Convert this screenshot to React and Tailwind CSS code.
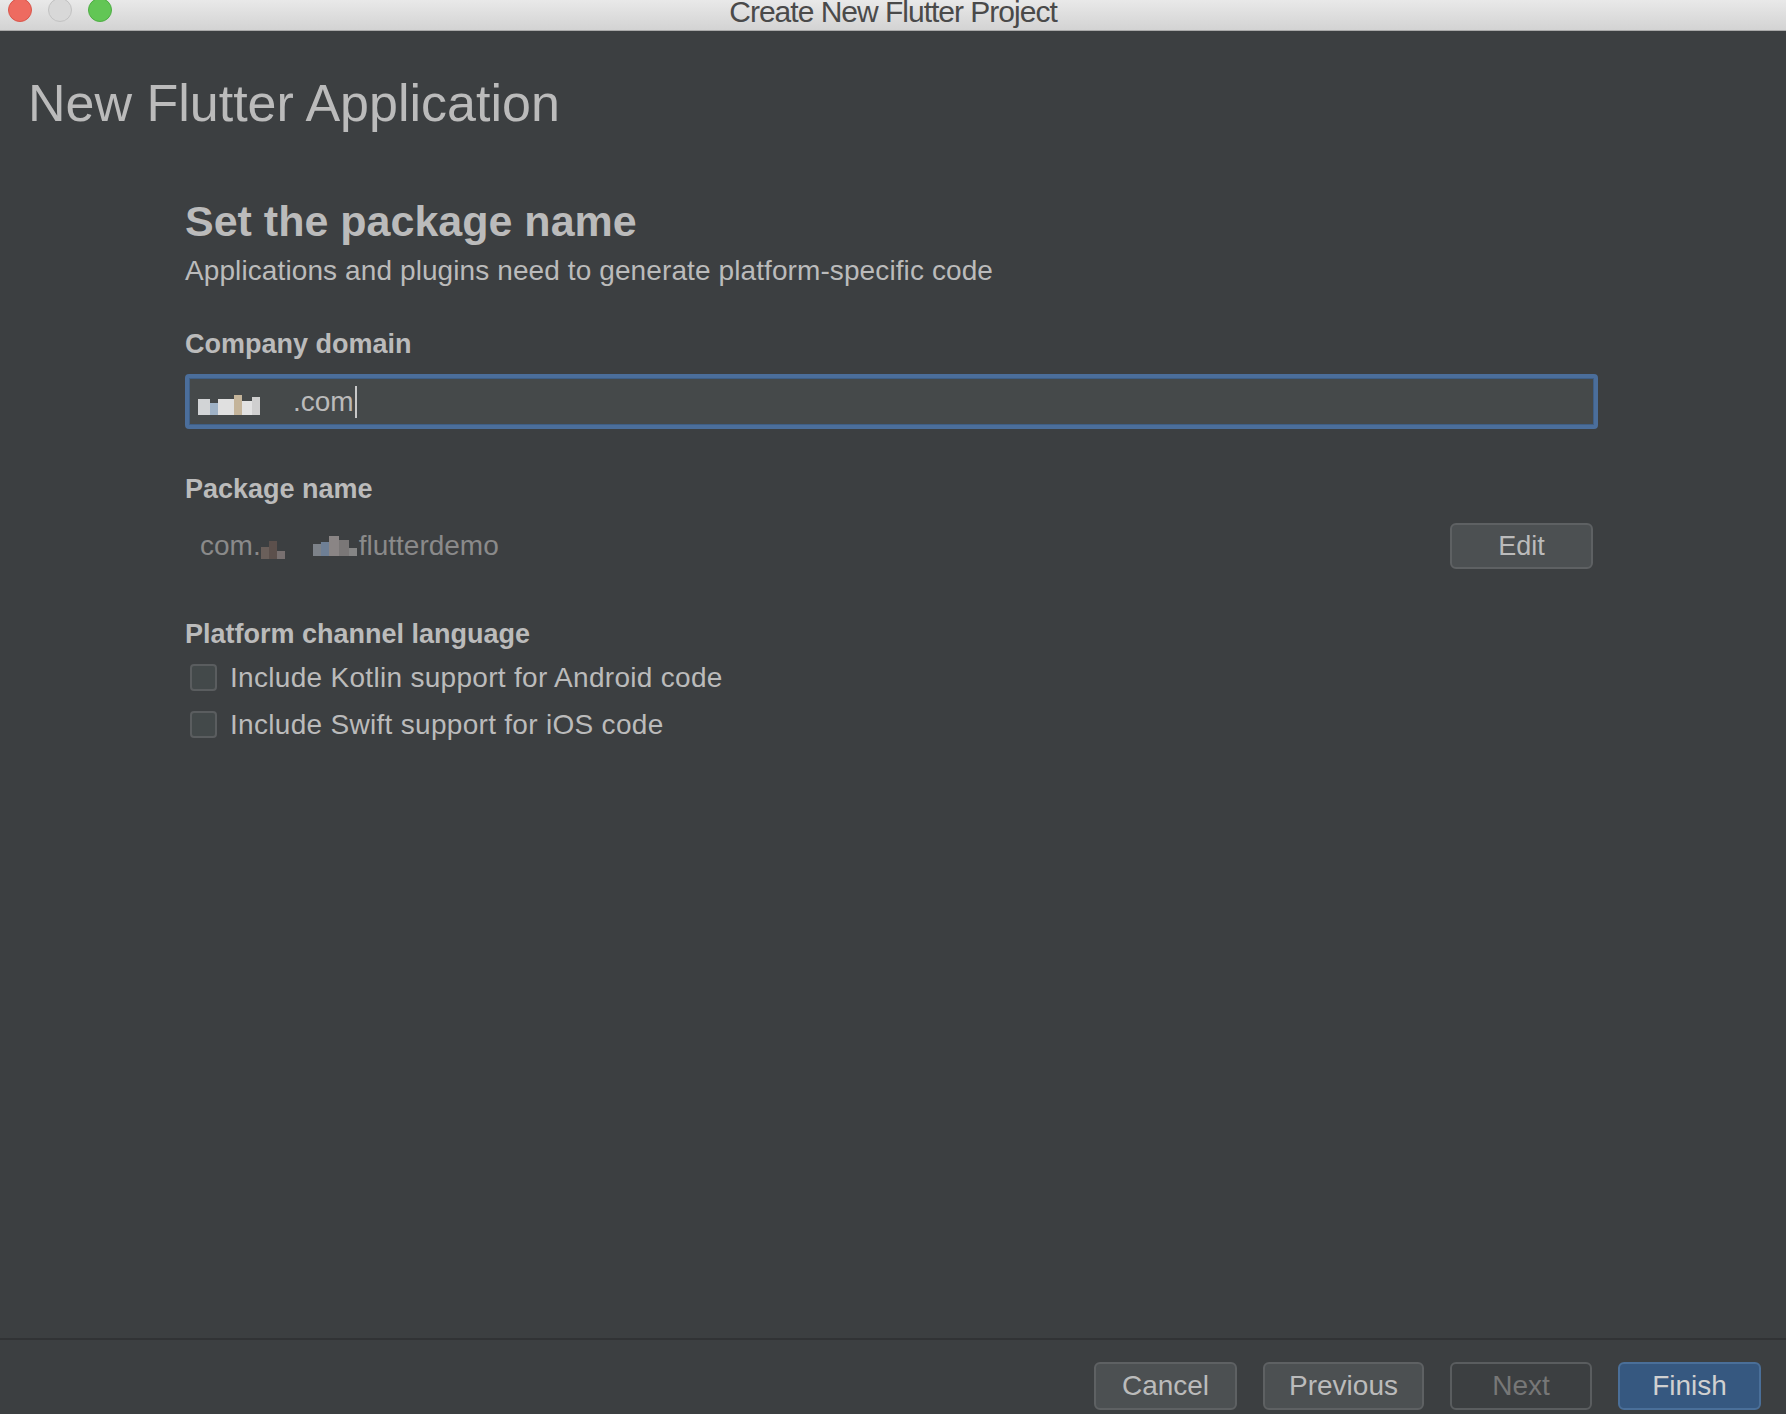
/**
 * Create New Flutter Project -- "Set the package name" wizard step (Darcula).
 */

const font = { fontFamily: '"Liberation Sans", Arial, sans-serif' };

function TrafficLights() {
  return (
    <div className="absolute left-[8px] top-[-2px] flex gap-[16px]">
      <div className="w-[24px] h-[24px] rounded-full bg-[#ee6b60] border border-[#d9574c]" />
      <div className="w-[24px] h-[24px] rounded-full bg-[#d8d8d8] border border-[#c2c2c2]" />
      <div className="w-[24px] h-[24px] rounded-full bg-[#62c655] border border-[#4fae45]" />
    </div>
  );
}

function Mosaic({ cells, className }) {
  return (
    <div className={`flex items-end ${className}`}>
      {cells.map((c, i) => (
        <div key={i} className={c} />
      ))}
    </div>
  );
}

function FooterButton({ children, variant = 'default' }) {
  const styles = {
    default: 'bg-[#4c5052] border-[#5e6163] text-[#bbbbbb]',
    disabled: 'bg-[#3c3f41] border-[#5a5d5f] text-[#777777]',
    primary: 'bg-[#365880] border-[#4a6f99] text-[#d0d0d0]',
  };
  return (
    <button className={`w-full h-[48px] rounded-[6px] border-2 text-[28px] leading-none ${styles[variant]}`}>
      {children}
    </button>
  );
}

export default function App() {
  return (
    <div className="h-[1414px] w-[1786px] flex flex-col bg-[#3c3f41] overflow-hidden" style={font}>
      {/* Window title bar */}
      <div className="relative h-[31px] shrink-0 bg-gradient-to-b from-[#e9e9e9] to-[#d3d3d3] border-b border-[#a9a9a9] overflow-hidden">
        <TrafficLights />
        <div className="flex justify-center">
          <span className="-mt-[3px] text-[30px] leading-none text-[#4a4a4a] tracking-[-1px]">
            Create New Flutter Project
          </span>
        </div>
      </div>

      {/* Wizard body */}
      <div className="flex-1 flex flex-col">
        <h1 className="ml-[28px] mt-[46px] text-[52px] leading-none font-normal text-[#bbbbbb]">
          New Flutter Application
        </h1>

        <div className="ml-[185px] w-[1413px] flex flex-col">
          <h2 className="mt-[71px] text-[43px] leading-none font-bold text-[#bbbbbb]">Set the package name</h2>
          <p className="mt-[14px] text-[28px] leading-none text-[#bbbbbb] tracking-[0.1px]">
            Applications and plugins need to generate platform-specific code
          </p>

          {/* Company domain */}
          <div className="mt-[46px] text-[27px] leading-none font-bold text-[#bbbbbb]">Company domain</div>
          <div className="mt-[16px] h-[55px] rounded-[4px] border-[4px] border-[#4b6e9b] bg-[#45494a] flex items-center pl-[9px] shadow-[inset_0_0_0_1px_#3f5f86]">
            <Mosaic
              className="w-[66px] h-[22px] mt-[4px]"
              cells={[
                'w-[12px] h-[16px] bg-[#d2d4d6]',
                'w-[8px] h-[12px] bg-[#9fb2c6]',
                'w-[16px] h-[16px] bg-[#e0e0e0]',
                'w-[8px] h-[20px] bg-[#c4b49a]',
                'w-[10px] h-[14px] bg-[#e2e2e2]',
                'w-[8px] h-[18px] bg-[#cfcfcf]',
              ]}
            />
            <span className="ml-[29px] text-[28px] leading-none text-[#bbbbbb]">.com</span>
            <span className="ml-[1px] w-[2px] h-[32px] bg-[#c8c8c8]" />
          </div>

          {/* Package name */}
          <div className="mt-[47px] text-[27px] leading-none font-bold text-[#bbbbbb]">Package name</div>
          <div className="mt-[20px] h-[46px] flex items-center justify-between">
            <div className="flex items-center pl-[15px] text-[28px] leading-none text-[#8a8a8a]">
              <span>com.</span>
              <Mosaic
                className="w-[26px] h-[20px] mt-[6px]"
                cells={['w-[8px] h-[12px] bg-[#6a5f5a]', 'w-[8px] h-[18px] bg-[#5c504c]', 'w-[8px] h-[8px] bg-[#787070]']}
              />
              <Mosaic
                className="ml-[26px] w-[46px] h-[20px]"
                cells={[
                  'w-[8px] h-[12px] bg-[#7d8289]',
                  'w-[8px] h-[14px] bg-[#6e7f95]',
                  'w-[10px] h-[20px] bg-[#8a8585]',
                  'w-[10px] h-[16px] bg-[#7a7777]',
                  'w-[8px] h-[8px] bg-[#858585]',
                ]}
              />
              <span>flutterdemo</span>
            </div>
            <button className="mr-[5px] w-[143px] h-[46px] rounded-[6px] border-2 border-[#5e6163] bg-[#4c5052] text-[27px] leading-none text-[#bbbbbb]">
              Edit
            </button>
          </div>

          {/* Platform channel language */}
          <div className="mt-[52px] text-[27px] leading-none font-bold text-[#bbbbbb]">Platform channel language</div>
          <div className="mt-[16px] flex flex-col gap-[20px]">
            {['Include Kotlin support for Android code', 'Include Swift support for iOS code'].map((label) => (
              <label key={label} className="h-[27px] flex items-center">
                <span className="ml-[5px] w-[27px] h-[27px] rounded-[4px] border-2 border-[#5a5d5f] bg-[#43494a]" />
                <span className="ml-[13px] text-[28px] leading-none text-[#bbbbbb] tracking-[0.3px]">{label}</span>
              </label>
            ))}
          </div>
        </div>
      </div>

      {/* Footer buttons */}
      <div className="shrink-0 border-t-2 border-[#313335] pt-[22px] pb-[4px] pr-[25px] flex justify-end gap-[26px]">
        <div className="w-[143px] flex"><FooterButton>Cancel</FooterButton></div>
        <div className="w-[161px] flex"><FooterButton>Previous</FooterButton></div>
        <div className="w-[142px] flex"><FooterButton variant="disabled">Next</FooterButton></div>
        <div className="w-[143px] flex"><FooterButton variant="primary">Finish</FooterButton></div>
      </div>
    </div>
  );
}
